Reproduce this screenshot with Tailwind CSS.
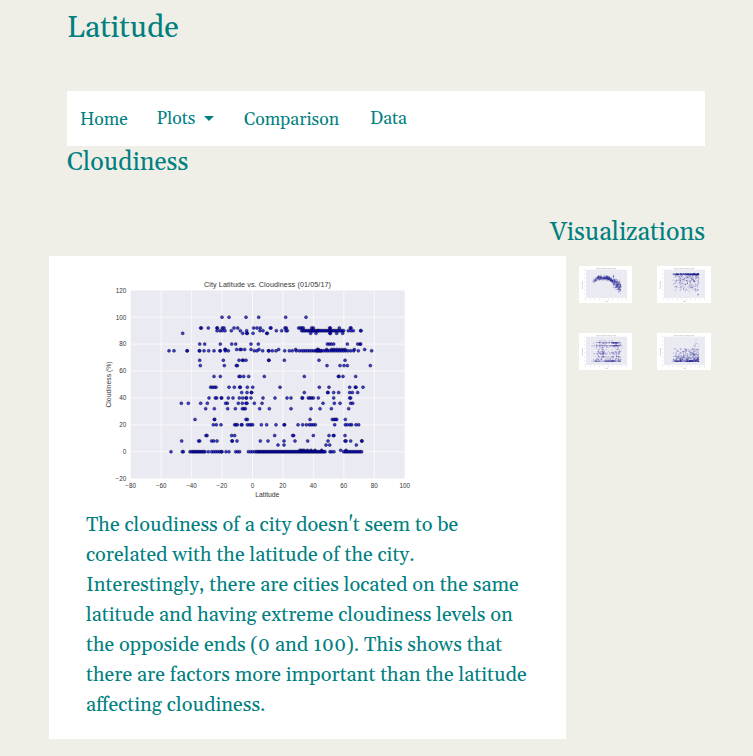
<!DOCTYPE html>
<html lang="en"><head><meta charset="utf-8"><title>Latitude</title>
<script src="https://cdn.jsdelivr.net/npm/@tailwindcss/browser@4"></script></head>
<body class="bg-[#efefe7] text-[#008080] font-[Georgia,Gelasio,'Liberation_Serif',serif] w-[753px] h-[756px] overflow-hidden">
<header class="ml-[67px] h-[91px] pt-[4px]"><h1 class="text-[30px] leading-[48px]">Latitude</h1></header>
<nav class="ml-[67px] w-[638px] h-[55px] bg-white flex items-center text-[17.6px] pl-[13px] pt-[2px]">
<a class="w-[76.5px] pt-[1px]">Home</a>
<a class="w-[87.5px] flex items-center">Plots<svg class="ml-[9px] -mt-px" width="10" height="5"><path d="M0 0H10L5 5Z" fill="#008080"/></svg></a>
<a class="w-[126px] pt-[1px]">Comparison</a>
<a>Data</a></nav>
<h2 class="ml-[67px] h-[70px] pt-px text-[25px] leading-[32px]">Cloudiness</h2>
<h2 class="w-[705px] h-[40px] pt-px text-right text-[25px] leading-[32px]">Visualizations</h2>
<main class="ml-[49px] flex items-start">
<section class="bg-white w-[517px] h-[483px]">
<svg id="chart" class="block" width="517" height="253" viewBox="49 256 517 253" font-family="Liberation Sans, sans-serif" fill="#333"></svg>
<div class="pl-[37px] pt-px text-[20px] leading-[30px] whitespace-nowrap oldstyle-nums">
<p>The cloudiness of a city doesn't seem to be</p>
<p>corelated with the latitude of the city.</p>
<p>Interestingly, there are cities located on the same</p>
<p>latitude and having extreme cloudiness levels on</p>
<p class="[font-feature-settings:'calt'_0,'onum'_1]">the opposide ends (0 and 100). This shows that</p>
<p>there are factors more important than the latitude</p>
<p>affecting cloudiness.</p></div></section>
<aside class="ml-[13px] mt-[10px] grid grid-cols-[53px_54px] gap-x-[25px] gap-y-[30px]">
<svg class="thumb bg-white" width="53" height="37"></svg><svg class="thumb bg-white" width="54" height="37"></svg>
<svg class="thumb bg-white" width="53" height="37"></svg><svg class="thumb bg-white" width="54" height="37"></svg></aside></main>
<script>
const seq=(a,b,s)=>{const r=[];for(let x=a;x<=b;x+=s)r.push(x);return r};
// Latitude positions are in thirds of a pixel from x=100, grouped by cloudiness.
const rows=[
[100,[366,387,438,476,557,618]],
[92,[302,304,325,351,352,367,372,402,413,461,471,481,511,513,555,559,596,601,606,610,635,640,689,691,718,751,753]],
[90,[351,360,367,375,394,421,440,480,489,529,545,558,562,...seq(605,735,4.5),639,655,690,691,745,753,760,782,783]],
[88,[248,428,440,442,459,500,502,632,648,690,691,710,728]],
[80,[299,314,361,395,407,453,475,682,688,694,701,742,773,780,782]],
[76,[375,376,410,420,424,434,453,477,536,587,652,655,680,695,702,710,718,727,735,763,794]],
[75,[207,222,261,262,298,299,312,326,342,360,361,376,385,463,471,488,505,507,517,528,554,568,577,589,598,...seq(605,738,6),650,656,662,744,752,761,775,815]],
[68,[299,370,417,427,430,438,506,507,553,657,735]],
[64,[301,373,409,412,681,720,732,742,811]],
[56,[342,361,417,421,431,446,493,613,715,717,729,767]],
[48,[332,337,343,348,387,403,419,421,442,458,540,658,687,749,766,768,789]],
[44,[425,441,454,455,613,683,684,701,716,749,757,773]],
[40,[327,346,350,364,365,385,399,418,428,438,440,453,489,525,561,573,606,608,625,630,635,640,655,701,749,752]],
[36,[244,265,302,322,377,382,415,427,438,441,463,486,669,703,720,752,758]],
[32,[317,343,383,406,427,432,436,479,508,573,633,660,694,746]],
[24,[285,343,344,438,442,630,697,702,707,710,736]],
[20,[340,349,363,404,408,412,424,426,442,448,453,458,484,500,528,552,554,594,608,619,628,634,640,646,704,736,742,750,755,768,776]],
[12,[318,321,395,404,524,578,581,640,687,700,702,735]],
[8,[245,296,299,335,341,351,396,397,411,481,504,552,585,623,684,735,738,752,785,786]],
[5,[534,552,678,689,769]],
[1,[600,606,612,622,633,645,665,722,738]],
[0,[213,247,250,270,...seq(275,315,4),325,335,341,347,353,359,364,366,378,387,407,413,419,445,452,458,465,...seq(470,678,3.6),690,695,702,...seq(731,787,4.5)]]];
const pts=rows.flatMap(([v,xs])=>xs.map(x=>[100+x/3,451.7-1.345*v]));
let s='<rect x="130.7" y="290.5" width="274" height="188" fill="#eaeaf2"/><g stroke="#fff" stroke-width=".7">';
for(let i=1;i<9;i++)s+=`<path d="M${130.7+i*30.45} 290.5V478.5"/>`;
for(let v=0;v<=100;v+=20)s+=`<path d="M130.7 ${451.7-1.345*v}H404.7"/>`;
s+='</g><g fill="#0000d0" fill-opacity=".75" stroke="#000020" stroke-opacity=".6" stroke-width=".7">';
pts.forEach(([x,y])=>s+=`<circle cx="${x}" cy="${y}" r="1.5"/>`);
s+='</g><g font-size="6.3" text-anchor="middle">';
for(let v=-80;v<=100;v+=20)s+=`<text x="${252.4+v*1.5225}" y="488">${String(v).replace('-','−')}</text>`;
s+='</g><g font-size="6.3" text-anchor="end">';
for(let v=-20;v<=120;v+=20)s+=`<text x="126.3" y="${454-1.345*v}">${String(v).replace('-','−')}</text>`;
s+='</g><text x="204" y="287" font-size="7.2" textLength="127">City Latitude vs. Cloudiness (01/05/17)</text><text x="267.3" y="497" font-size="6.8" text-anchor="middle">Latitude</text><text transform="translate(111 384.5) rotate(-90)" font-size="6.8" text-anchor="middle">Cloudiness (%)</text>';
chart.innerHTML=s;
let seed=7;const R=()=>(seed=(seed*16807)%2147483647)/2147483647,N=()=>(R()+R()+R()-1.5);
const sets=[[],[],pts.map(([x,y])=>[7+(x-130.7)*.15,3.7+(y-290.5)*.151]),[]];
for(let i=0;i<480;i++){
 const t=Math.pow(R(),.75),x=14+28*t;
 const m=x<19?15.5-(x-14)*.65:x<28?11.8:12+Math.pow((x-28)/13,1.35)*9;
 sets[0].push([x,m+N()*(x>34?5:2)]);
 const x2=16+26*Math.pow(R(),.8);
 sets[1].push([x2,R()<.3?7.6+R():8+Math.pow(R(),2.2)*17]);
 sets[3].push([x2,28.4-Math.pow(R(),2.8)*(x2>36?18:13)]);
}
sets[1].push([41,28.4],[41.6,28.6],[40.7,28.7],[41.3,28]);sets[3].push([39,7],[38.5,10],[42,13]);
document.querySelectorAll('.thumb').forEach((e,i)=>{
 let h='<rect x="7" y="3.7" width="41" height="28.3" fill="#eaeaf2"/><g stroke="#fff" stroke-width=".15">';
 for(let k=1;k<9;k++)h+=`<path d="M${7+k*4.56} 3.7V32"/>`;
 h+='</g><g fill="#101088" fill-opacity=".24">';
 sets[i].forEach(([x,y])=>h+=`<circle cx="${x}" cy="${y}" r=".62"/>`);
 h+='</g><g stroke="#333" stroke-opacity=".55" stroke-width=".6" stroke-dasharray=".7 .5"><path d="M17 2.7H37M26 35.3H29.5M3.4 15V23"/><path d="M6.5 33.2H49" stroke-dasharray=".6 3.9"/><path d="M5.7 3.7V32" stroke-dasharray=".5 3.5"/></g>';
 e.innerHTML=h;
});
</script></body></html>
